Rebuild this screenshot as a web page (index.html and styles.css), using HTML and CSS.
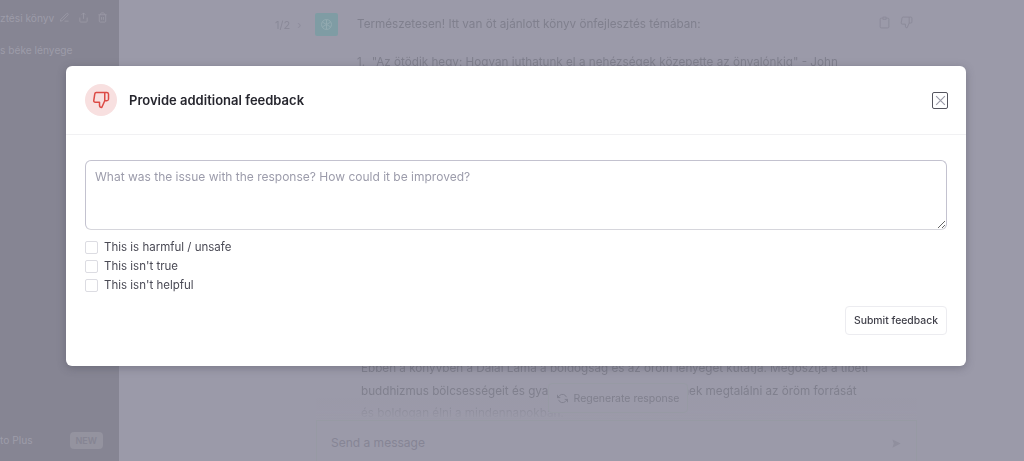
FILE: index.html
```html
<!DOCTYPE html>
<html lang="hu">
<head>
<meta charset="utf-8">
<title>Feedback</title>
<link rel="stylesheet" href="styles.css">
</head>
<body>
<div class="app">
  <aside class="sidebar">
    <div class="chat-row">
      <span class="chat-title">ztési könyv</span>
      <svg class="side-icon" viewBox="0 0 24 24"><path d="M12 20h9M16.500 3.500a2.100 2.100 0 0 1 3 3L7 19l-4 1 1-4z"/></svg>
      <svg class="side-icon" viewBox="0 0 24 24"><path d="M4 12v8a2 2 0 0 0 2 2h12a2 2 0 0 0 2-2v-8M16 6l-4-4-4 4M12 2v13"/></svg>
      <svg class="side-icon" viewBox="0 0 24 24"><path d="M3 6h18M19 6v14a2 2 0 0 1-2 2H7a2 2 0 0 1-2-2V6M8 6V4a2 2 0 0 1 2-2h4a2 2 0 0 1 2 2v2M10 11v6M14 11v6"/></svg>
    </div>
    <div class="chat-second">s béke lényege</div>
    <div class="side-foot"><span>to Plus</span><span class="new-badge">NEW</span></div>
  </aside>
  <main class="main">
    <div class="message">
      <div class="pager">
        <span>1/2</span><span class="pager-next">›</span>
      </div>
      <div class="avatar">
        <svg viewBox="0 0 24 24"><circle cx="12" cy="12" r="7"/><path d="M12 5v14M6 8.500l12 7M18 8.500l-12 7"/></svg>
      </div>
      <div class="msg-body">
        <p class="msg-line">Természetesen! Itt van öt ajánlott könyv önfejlesztés témában:</p>
        <p class="msg-item">1.&nbsp;&nbsp;"Az ötödik hegy: Hogyan juthatunk el a nehézségek közepette az önvalónkig" - John</p>
      </div>
      <div class="msg-actions">
        <svg viewBox="0 0 24 24"><path d="M8 4H6a2 2 0 0 0-2 2v14a2 2 0 0 0 2 2h12a2 2 0 0 0 2-2V6a2 2 0 0 0-2-2h-2M9 2h6v4H9z"/></svg>
        <svg viewBox="0 0 24 24"><path d="M10 15v4a3 3 0 0 0 3 3l4-9V2H5.700a2 2 0 0 0-2 1.700L2.300 12.700a2 2 0 0 0 2 2.300zM17 2h3a2 2 0 0 1 2 2v7a2 2 0 0 1-2 2h-3"/></svg>
      </div>
    </div>
    <div class="tail">
      <p>Ebben a könyvben a Dalai Láma a boldogság és az öröm lényegét kutatja. Megosztja a tibeti</p>
      <p>buddhizmus bölcsességeit és gyakorlatait, amelyek segítenek megtalálni az öröm forrását</p>
      <p>és boldogan élni a mindennapokban.</p>
    </div>
    <div class="composer">
      <button class="regen" type="button">
        <svg viewBox="0 0 24 24"><path d="M1 4v6h6M23 20v-6h-6M20.500 9A9 9 0 0 0 5.600 5.600L1 10m22 4-4.600 4.400A9 9 0 0 1 3.500 15"/></svg>
        <span>Regenerate response</span>
      </button>
      <div class="send-box">
        <span>Send a message</span>
        <svg viewBox="0 0 24 24"><path d="M3 3l18 9-18 9 3-9z"/></svg>
      </div>
    </div>
  </main>
</div>

<div class="overlay">
  <section class="modal">
    <header class="modal-head">
      <div class="modal-title-wrap">
        <span class="thumb-circle">
          <svg viewBox="0 0 24 24"><path d="M10 15v4a3 3 0 0 0 3 3l4-9V2H5.720a2 2 0 0 0-2 1.700l-1.380 9a2 2 0 0 0 2 2.300zM17 2h2.670A2.310 2.310 0 0 1 22 4v7a2.310 2.310 0 0 1-2.330 2H17"/></svg>
        </span>
        <h2 class="modal-title">Provide additional feedback</h2>
      </div>
      <button class="close" type="button" aria-label="Close">
        <svg viewBox="0 0 24 24"><path d="M19 5 5 19M5 5l14 14"/></svg>
      </button>
    </header>
    <form class="modal-body">
      <textarea class="feedback" placeholder="What was the issue with the response? How could it be improved?"></textarea>
      <div class="checks">
        <label class="check"><input type="checkbox"><span>This is harmful / unsafe</span></label>
        <label class="check"><input type="checkbox"><span>This isn't true</span></label>
        <label class="check"><input type="checkbox"><span>This isn't helpful</span></label>
      </div>
      <div class="actions">
        <button class="submit" type="button">Submit feedback</button>
      </div>
    </form>
  </section>
</div>
</body>
</html>
```

FILE: styles.css
```css
* { box-sizing: border-box; }

html, body {
  margin: 0;
  height: 100%;
  overflow: hidden;
}

body {
  font-family: Inter, "Liberation Sans", sans-serif;
  background: #9b9aa9;
}

.app {
  display: flex;
  height: 461px;
  filter: blur(0.5px);
}

.sidebar {
  width: 119px;
  flex: none;
  display: flex;
  flex-direction: column;
  background: #868593;
  color: #9d9ca9;
  font-size: 10.200px;
  overflow: hidden;
}

.chat-row {
  display: flex;
  align-items: center;
  gap: 8px;
  height: 35px;
}

.chat-title { white-space: nowrap; margin-right: -3px; }

.side-icon {
  width: 11px;
  height: 11px;
  flex: none;
  fill: none;
  stroke: #9d9ca9;
  stroke-width: 1.600;
}

.chat-second {
  margin-top: 9px;
  height: 16px;
}

.side-foot {
  margin-top: auto;
  height: 42px;
  display: flex;
  align-items: center;
  justify-content: space-between;
  padding: 0 16px 0 0;
}

.new-badge {
  background: #94939f;
  color: #868593;
  font-size: 9px;
  font-weight: 600;
  padding: 3px 6px;
  border-radius: 4px;
}

.main {
  flex: 1;
  position: relative;
  display: flex;
  flex-direction: column;
  color: #80808e;
  font-size: 11.700px;
  min-width: 0;
}

.message {
  display: flex;
  padding-top: 13px;
  height: 346px;
}

.pager {
  margin-left: 156px;
  width: 40px;
  display: flex;
  gap: 7px;
  height: 24px;
  align-items: center;
  font-size: 11px;
  color: #8a8998;
  white-space: nowrap;
}

.pager-next { color: #8f8e9d; }

.avatar {
  width: 23px;
  height: 23px;
  flex: none;
  background: #7f9ca4;
  border-radius: 2px;
  display: flex;
  align-items: center;
  justify-content: center;
}

.avatar svg {
  width: 17px;
  height: 17px;
  fill: none;
  stroke: #93aab0;
  stroke-width: 1.400;
}

.msg-body {
  margin-left: 19px;
  width: 510px;
  flex: none;
}

.msg-line {
  margin: 1px 0 0;
  line-height: 20px;
  white-space: nowrap;
}

.msg-item {
  margin: 18px 0 0;
  line-height: 20px;
  white-space: nowrap;
}

.msg-actions {
  display: flex;
  gap: 9px;
  margin-left: 11px;
}

.msg-actions svg {
  width: 13px;
  height: 13px;
  margin-top: 3px;
  fill: none;
  stroke: #8a8998;
  stroke-width: 1.600;
}

.tail {
  padding-left: 242px;
  height: 73px;
  margin-top: 11px;
}

.tail p {
  margin: 0;
  line-height: 22.500px;
  white-space: nowrap;
}

.composer {
  position: absolute;
  left: 197px;
  bottom: 0;
  width: 601px;
  height: 78px;
  background: linear-gradient(rgba(155, 154, 169, 0) 15px, #9b9aa9 37px);
}

.regen {
  position: absolute;
  left: 232px;
  top: 0;
  width: 140px;
  height: 30px;
  display: flex;
  align-items: center;
  justify-content: center;
  gap: 6px;
  padding: 0;
  background: #9b9aa9;
  border: 1px solid #979aa4;
  border-radius: 4px;
  color: #80808e;
  font: inherit;
  font-size: 10.500px;
}

.regen svg {
  width: 11px;
  height: 11px;
  fill: none;
  stroke: #80808e;
  stroke-width: 2;
}

.send-box {
  position: absolute;
  left: 0;
  right: 0;
  bottom: 0;
  height: 41px;
  display: flex;
  align-items: flex-start;
  justify-content: space-between;
  padding: 14px 14px 0 14px;
  border: 1px solid #979aa4;
  border-bottom: 0;
  background: #9b9aa9;
  color: #868595;
  font-size: 12px;
}

.send-box svg {
  width: 11px;
  height: 11px;
  margin-top: 3px;
  fill: #908f9e;
}

.overlay {
  position: fixed;
  inset: 0;
}

.modal {
  position: absolute;
  left: 66px;
  top: 66px;
  width: 900px;
  height: 300px;
  background: #fff;
  border-radius: 6px;
  box-shadow: 0 2px 8px rgba(60, 60, 75, 0.35);
  display: flex;
  flex-direction: column;
  filter: blur(0.25px);
}

.modal-head {
  height: 69px;
  flex: none;
  display: flex;
  align-items: center;
  justify-content: space-between;
  padding: 0 18px 0 19px;
  border-bottom: 1px solid #f1f1f3;
}

.modal-title-wrap {
  display: flex;
  align-items: center;
  gap: 12px;
}

.thumb-circle {
  width: 32px;
  height: 32px;
  border-radius: 50%;
  background: #f8e0e0;
  display: flex;
  align-items: center;
  justify-content: center;
}

.thumb-circle svg {
  width: 18px;
  height: 18px;
  fill: none;
  stroke: #dc4a45;
  stroke-width: 2;
  stroke-linecap: round;
  stroke-linejoin: round;
}

.modal-title {
  margin: 0;
  font-size: 13px;
  font-weight: 600;
  color: #26262e;
  white-space: nowrap;
}

.close {
  width: 16px;
  height: 17px;
  padding: 0;
  display: flex;
  align-items: center;
  justify-content: center;
  background: #fff;
  border: 1.500px solid #55555f;
  border-radius: 2px;
}

.close svg {
  width: 15px;
  height: 15px;
  flex: none;
  fill: none;
  stroke: #9a9aa8;
  stroke-width: 1.800;
}

.modal-body {
  flex: 1;
  display: flex;
  flex-direction: column;
  padding: 25px 19px 0;
}

.feedback {
  display: block;
  width: 100%;
  height: 70px;
  flex: none;
  padding: 8px 9px;
  border: 1px solid #c3c2cf;
  border-bottom-color: #d6d6dc;
  border-radius: 6px;
  outline: 0;
  font-family: inherit;
  font-size: 12px;
  line-height: 16px;
  background: #fff;
  color: #26262e;
}

.feedback::placeholder {
  color: #9c9cab;
  opacity: 1;
}

.checks {
  margin-top: 10px;
  display: flex;
  flex-direction: column;
  gap: 5px;
}

.check {
  display: flex;
  align-items: center;
  gap: 6px;
  height: 14px;
  font-size: 11.500px;
  color: #4a4a55;
}

.check input {
  appearance: none;
  margin: 0;
  width: 13px;
  height: 13px;
  border: 1px solid #dcdce2;
  border-radius: 2px;
  background: #fff;
}

.actions {
  margin-top: 14px;
  display: flex;
  justify-content: flex-end;
}

.submit {
  width: 102px;
  height: 29px;
  padding: 0;
  background: #fff;
  border: 1px solid #ececf0;
  border-radius: 4px;
  font-family: inherit;
  font-size: 10.400px;
  font-weight: 500;
  color: #40404a;
}
```
